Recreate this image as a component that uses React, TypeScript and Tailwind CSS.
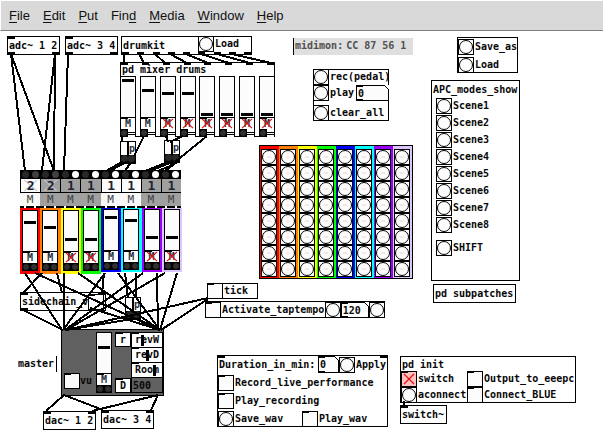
import React from "react";
import clsx from "clsx";

const MENUS: [string, string, string][] = [
  ["", "F", "ile"],
  ["", "E", "dit"],
  ["", "P", "ut"],
  ["Fin", "d", ""],
  ["", "M", "edia"],
  ["", "W", "indow"],
  ["", "H", "elp"],
];

const DRUMS = [
  { level: 97, muted: false },
  { level: 69, muted: false },
  { level: 59, muted: true },
  { level: 59, muted: true },
  { level: 0, muted: true },
  { level: 0, muted: true },
  { level: 0, muted: true },
  { level: 0, muted: true },
];

const CHANNELS = [
  { color: "bg-[#ff0000]", level: 75, muted: false, num: "2", shaded: false, crossed: true },
  { color: "bg-[#ff8000]", level: 60, muted: false, num: "2", shaded: true, crossed: true },
  { color: "bg-[#ffff00]", level: 27, muted: true, num: "1", shaded: true, crossed: false },
  { color: "bg-[#00ff00]", level: 27, muted: true, num: "1", shaded: true, crossed: false },
  { color: "bg-[#0000ff]", level: 86, muted: false, num: "1", shaded: false, crossed: false },
  { color: "bg-[#00ffff]", level: 76, muted: false, num: "1", shaded: false, crossed: false },
  { color: "bg-[#9900ff]", level: 29, muted: true, num: "1", shaded: true, crossed: false },
  { color: "bg-[#dcc4fc]", level: 29, muted: true, num: "1", shaded: true, crossed: false },
];

const SCENES = ["Scene1", "Scene2", "Scene3", "Scene4", "Scene5", "Scene6", "Scene7", "Scene8"];

// Patch cords, in window coordinates: x1, y1, x2, y2.
const CORDS: number[][] = [
  [11, 54, 25, 171], [11, 54, 54, 171], [55, 54, 42, 171], [55, 54, 54, 171], [68, 54, 64, 171],
  [124, 54, 124, 62], [139, 54, 144, 63], [155, 54, 165, 63], [170, 54, 187, 63],
  [186, 54, 208, 63], [201, 54, 229, 63], [217, 54, 250, 63], [232, 54, 271, 63],
  [122, 136, 122, 142], [144, 136, 134, 156], [166, 136, 168, 142], [183, 136, 170, 142], [207, 136, 170, 166],
  [122, 162, 106, 171], [126, 162, 110, 171], [131, 162, 125, 171],
  [168, 162, 145, 171], [172, 162, 150, 171], [177, 162, 165, 171], [170, 166, 158, 171],
  [25, 273, 62, 330], [35, 273, 160, 330], [42, 273, 23, 293], [57, 273, 62, 293],
  [64, 273, 64, 330], [78, 273, 160, 330], [105, 273, 63, 330], [104, 273, 102, 294],
  [118, 273, 160, 330], [125, 273, 128, 298], [136, 273, 136, 298], [143, 273, 65, 330],
  [157, 273, 158, 330], [165, 273, 66, 330], [177, 273, 160, 330],
  [23, 310, 63, 330], [90, 308, 160, 330], [132, 319, 66, 330], [138, 319, 160, 330],
  [208, 298, 66, 330], [208, 299, 161, 330],
  [64, 395, 46, 411], [64, 395, 103, 410], [158, 395, 92, 411], [158, 395, 151, 410],
  [404, 401, 404, 406],
];

function Ports({ count, side }: { count: number; side: "top" | "bottom" }) {
  return (
    <span
      className={clsx(
        "pointer-events-none absolute inset-x-0 flex justify-between",
        side === "top" ? "top-0" : "bottom-0",
      )}
    >
      {Array.from({ length: count }, (_, i) => (
        <span key={i} className="h-[2px] w-[7px] bg-black" />
      ))}
    </span>
  );
}

function Box({
  className,
  ins = 0,
  outs = 0,
  children,
}: {
  className: string;
  ins?: number;
  outs?: number;
  children?: React.ReactNode;
}) {
  return (
    <div className={clsx("absolute border border-black bg-white", className)}>
      {children}
      {ins > 0 && <Ports count={ins} side="top" />}
      {outs > 0 && <Ports count={outs} side="bottom" />}
    </div>
  );
}

function ObjectBox(props: { className: string; ins?: number; outs?: number; text: string }) {
  return (
    <Box className={clsx("flex h-[19px] items-center px-px", props.className)} ins={props.ins} outs={props.outs}>
      {props.text}
    </Box>
  );
}

function Bang({ label, className }: { label: string; className?: string }) {
  return (
    <button
      type="button"
      aria-label={label}
      className={clsx("block size-4 shrink-0 border border-black bg-[#fcfcfc]", className)}
    >
      <span className="block size-full rounded-full border border-black" />
    </button>
  );
}

function BangLabel({ text }: { text: string }) {
  return (
    <label className="flex items-center gap-px">
      <Bang label={text} />
      {text}
    </label>
  );
}

function Toggle({ label, on = false }: { label: string; on?: boolean }) {
  return (
    <span className="relative block size-4 shrink-0">
      <input
        type="checkbox"
        aria-label={label}
        defaultChecked={on}
        className="block size-4 appearance-none border border-black bg-[#fcfcfc] checked:bg-[#ffc0c0]"
      />
      <span className="pointer-events-none absolute left-0 top-0 h-[2px] w-[7px] bg-black" />
      {on && <Cross className="inset-0 p-[2px] text-[#e01010]" />}
    </span>
  );
}

function ToggleLabel({ text, on }: { text: string; on?: boolean }) {
  return (
    <label className="flex items-center gap-px">
      <Toggle label={text} on={on} />
      {text}
    </label>
  );
}

function Cross({ className }: { className: string }) {
  return (
    <svg
      viewBox="0 0 12 12"
      preserveAspectRatio="none"
      className={clsx("pointer-events-none absolute size-full", className)}
      aria-hidden="true"
    >
      <path
        d="M1 1L11 11M11 1L1 11"
        stroke="currentColor"
        strokeWidth="1.2"
        fill="none"
        vectorEffect="non-scaling-stroke"
      />
    </svg>
  );
}

function NumberBox({ label, value, className }: { label: string; value: string; className: string }) {
  return (
    <span className={clsx("relative block shrink-0", className)}>
      <input
        aria-label={label}
        defaultValue={value}
        className="block size-full rounded-none border border-black bg-[#fcfcfc] px-px font-bold"
      />
      <span className="pointer-events-none absolute left-0 top-0 h-[2px] w-[7px] bg-black" />
      <span className="pointer-events-none absolute bottom-0 left-0 h-[2px] w-[7px] bg-black" />
      <svg viewBox="0 0 5 5" className="absolute right-0 top-0 size-[5px]" aria-hidden="true">
        <path d="M0 0H5V5Z" fill="#fff" />
        <path d="M0 0L5 5" stroke="#000" strokeWidth="1" />
      </svg>
    </span>
  );
}

function Fader({ label, level }: { label: string; level: number }) {
  return (
    <input
      type="range"
      aria-label={label}
      defaultValue={level}
      className="m-0 block h-[42px] w-4 appearance-none rounded-none border border-black bg-[#fcfcfc] px-px [direction:rtl] [writing-mode:vertical-lr] [&::-webkit-slider-thumb]:h-[3px] [&::-webkit-slider-thumb]:w-3 [&::-webkit-slider-thumb]:appearance-none [&::-webkit-slider-thumb]:rounded-none [&::-webkit-slider-thumb]:border-0 [&::-webkit-slider-thumb]:bg-black"
    />
  );
}

function MuteBox({ label, muted }: { label: string; muted: boolean }) {
  return (
    <label className="relative flex h-[11px] w-4 items-center justify-center border-x border-black bg-white text-[#243040]">
      <input type="checkbox" aria-label={label} defaultChecked={muted} className="absolute inset-0 appearance-none" />
      <span className="relative">M</span>
      {muted && <Cross className="inset-0 px-px text-[#e01010]" />}
      <span className="absolute left-0 top-0 h-px w-[7px] bg-black" />
    </label>
  );
}

function Dots({ label }: { label: string }) {
  return (
    <span className="flex w-4 bg-black">
      <button type="button" aria-label={label + " solo"} className="size-2 rounded-full border border-black bg-[#303030]" />
      <button type="button" aria-label={label + " send"} className="size-2 rounded-full border border-black bg-[#303030]" />
    </span>
  );
}

function DrumStrip({ level, muted, label }: { level: number; muted: boolean; label: string }) {
  return (
    <div className="w-4">
      <Fader label={label} level={level} />
      <MuteBox label={label + " mute"} muted={muted} />
      <div className="flex h-2 w-4 border-r border-black bg-white">
        <span className="flex size-2 bg-black">
          <button type="button" aria-label={label + " bang"} className="size-2 rounded-full border border-black bg-[#303030]" />
        </span>
        <span className="mt-[3px] h-[3px] flex-1 border-y border-black" />
      </div>
    </div>
  );
}

function PanBox({ className }: { className: string }) {
  return (
    <div className={clsx("absolute flex h-[23px] w-4 flex-col border border-black bg-white", className)}>
      <div className="flex h-[13px] items-center">
        <span className="h-full w-[6px] bg-[#fcfcfc]" />
        <span className="h-full w-[2px] bg-black" />
        <span className="text-[#243040]">p</span>
      </div>
      <div className="flex h-2 bg-black">
        <span className="size-[7px] rounded-full bg-[#282828]" />
        <span className="size-[7px] rounded-full bg-[#282828]" />
      </div>
    </div>
  );
}

function MiniSlider({ text, level }: { text: string; level: number }) {
  return (
    <label className="relative flex h-[15px] w-8 items-center justify-center border border-b-0 border-black bg-white">
      {text}
      <input
        type="range"
        aria-label={text}
        defaultValue={level}
        className="absolute inset-0 m-0 w-full appearance-none bg-transparent [&::-webkit-slider-thumb]:h-[11px] [&::-webkit-slider-thumb]:w-[3px] [&::-webkit-slider-thumb]:appearance-none [&::-webkit-slider-thumb]:rounded-none [&::-webkit-slider-thumb]:border-0 [&::-webkit-slider-thumb]:bg-black"
      />
      <span className="pointer-events-none absolute left-0 top-0 h-px w-[7px] bg-black" />
    </label>
  );
}

function MenuBar() {
  return (
    <nav className="flex h-[31px] items-center gap-[13px] border-b border-l border-t border-b-[#808080] border-l-white border-t-white bg-[#d9d9d9] pl-2 font-['Liberation_Sans',Arial,sans-serif] text-[13px] leading-4 text-[#111]">
      {MENUS.map(([before, key, after]) => (
        <button key={before + key + after} type="button">
          {before}
          <span className="underline underline-offset-2">{key}</span>
          {after}
        </button>
      ))}
    </nav>
  );
}

function ChannelHeads() {
  return (
    <div className="absolute left-[20px] top-[139px] grid w-[161px] grid-cols-8">
      {CHANNELS.map((c, i) => (
        <div key={i} className="relative">
          <div className="flex h-[9px] items-center justify-around bg-black">
            <button type="button" aria-label={"Pick " + (i + 1)} className="size-[7px] rounded-full bg-[#282828]" />
            <button
              type="button"
              aria-label={"Arm " + (i + 1)}
              className={clsx("size-[7px] rounded-full", i > 1 ? "bg-white" : "bg-[#404040]")}
            />
          </div>
          <div
            className={clsx(
              "relative flex h-[14px] items-center justify-center border-b border-l border-black text-[13px] text-[#1c2430]",
              c.shaded ? "bg-[#a0a0a0]" : "bg-[#fcfcfc]",
            )}
          >
            {c.crossed && <Cross className="inset-0 px-[2px] text-[#c8c8c8]" />}
            <span className="relative">{c.num}</span>
          </div>
          <div
            className={clsx(
              "flex h-[13px] items-center justify-center text-[11px] font-normal text-[#404040]",
              c.shaded ? "bg-[#a0a0a0]" : "bg-[#f8f8f8]",
            )}
          >
            M
          </div>
          <div className="flex h-[2px] justify-around bg-black">
            <span className="w-[2px] bg-white" />
            <span className="w-[2px] bg-white" />
          </div>
        </div>
      ))}
    </div>
  );
}

function ChannelFaders() {
  return (
    <div className="absolute left-[20px] top-[177px] grid w-[162px] grid-cols-8 items-start">
      {CHANNELS.map((c, i) => (
        <div key={i} className={clsx("flex justify-center", c.color, i > 3 ? "h-[64px] pt-px" : "h-[66px] pt-[2px]")}>
          <div className="w-4">
            <Fader label={"Channel " + (i + 1)} level={c.level} />
            <MuteBox label={"Mute " + (i + 1)} muted={c.muted} />
            <Dots label={"Channel " + (i + 1)} />
          </div>
        </div>
      ))}
    </div>
  );
}

function ClipGrid() {
  return (
    <div className="absolute left-[259px] top-[114px] flex border border-black">
      {CHANNELS.map((c, i) => (
        <div key={i} className={clsx("w-[19px] pb-px pl-px pt-[3px]", c.color)}>
          {SCENES.map((s) => (
            <button
              key={s}
              type="button"
              aria-label={s + ", channel " + (i + 1)}
              className="block size-4 border border-black bg-[#fcfcfc]"
            >
              <span className="flex size-full items-center justify-center rounded-full border border-black">
                <span className="h-[2px] w-1 bg-[#fde4e4]" />
              </span>
            </button>
          ))}
        </div>
      ))}
    </div>
  );
}

function Master() {
  return (
    <>
      <div className="absolute left-[18px] top-[325px] flex h-4 items-center border-r border-black pr-[2px]">master</div>
      <div className="absolute left-[61px] top-[298px] flex h-[67px] w-[103px] border border-black bg-[#606060] pt-[2px]">
        <label className="mt-[41px] flex h-4 w-[34px] items-center pl-[2px]">
          <Toggle label="vu" />
          vu
        </label>
        <div className="w-4">
          <Fader label="Master" level={67} />
          <MuteBox label="Mute master" muted={false} />
          <Dots label="Master" />
        </div>
        <div className="ml-[3px] flex w-4 flex-col justify-between pb-[2px]">
          <div className="relative flex h-[15px] items-center justify-center border border-black bg-white">
            r
            <span className="absolute left-0 top-0 h-px w-[7px] bg-black" />
          </div>
          <div className="relative flex h-[15px] items-center justify-center border border-black bg-white">
            D
            <span className="absolute left-0 top-0 h-px w-[7px] bg-black" />
          </div>
        </div>
        <div className="w-8">
          <MiniSlider text="revW" level={34} />
          <MiniSlider text="revD" level={52} />
          <MiniSlider text="Room" level={78} />
          <input
            aria-label="Delay time"
            defaultValue="500"
            className="block h-4 w-8 rounded-none border border-black bg-[#606060] pl-px font-bold"
          />
        </div>
      </div>
    </>
  );
}

function Cords() {
  return (
    <svg
      className="pointer-events-none absolute left-0 top-0 size-full overflow-visible"
      shapeRendering="crispEdges"
      aria-hidden="true"
    >
      <g transform="translate(0 -31)" stroke="#000" strokeWidth="2">
        {CORDS.map(([x1, y1, x2, y2], i) => (
          <line key={i} x1={x1} y1={y1} x2={x2} y2={y2} />
        ))}
      </g>
    </svg>
  );
}

export default function App() {
  return (
    <div className="flex min-h-screen flex-col bg-white">
      <MenuBar />
      <main className="relative flex-1 overflow-hidden whitespace-nowrap font-['DejaVu_Sans_Mono',monospace] text-[10px] font-bold leading-3 text-[#080808]">
        <ObjectBox className="left-[7px] top-[5px] w-[53px]" text="adc~ 1 2" ins={1} outs={2} />
        <ObjectBox className="left-[65px] top-[5px] w-[53px]" text="adc~ 3 4" ins={1} outs={2} />

        <Box className="left-[121px] top-[5px] flex h-[19px] w-[131px] items-start pl-px" outs={9}>
          <span className="w-[75px] self-center">drumkit</span>
          <div className="-mt-px">
            <BangLabel text="Load" />
          </div>
        </Box>

        <Box className="left-[120px] top-[31px] h-[75px] w-[155px]" ins={8}>
          <p className="pl-px pt-px">pd mixer drums</p>
          <div className="-mx-px flex justify-between">
            {DRUMS.map((d, i) => (
              <DrumStrip key={i} label={"Drum " + (i + 1)} level={d.level} muted={d.muted} />
            ))}
          </div>
        </Box>

        <PanBox className="left-[120px] top-[110px]" />
        <PanBox className="left-[164px] top-[109px]" />

        <ChannelHeads />
        <ChannelFaders />

        <Box className="left-[20px] top-[261px] flex h-[19px] w-[86px] items-center pl-px" ins={2} outs={1}>
          <span className="w-[66px]">sidechain_v</span>
          <Toggle label="sidechain_v" />
        </Box>
        <PanBox className="left-[125px] top-[266px]" />

        <Master />
        <ObjectBox className="left-[43px] top-[380px] w-[53px]" text="dac~ 1 2" ins={2} />
        <ObjectBox className="left-[101px] top-[379px] w-[53px]" text="dac~ 3 4" ins={2} />

        <div className="absolute left-[293px] top-[7px] flex h-[17px] w-[120px] items-center gap-[3px] border-l border-black bg-[#dfdfdf] pb-[2px] pl-px text-[#505050]">
          <span>midimon:</span>
          <span>CC 87 56 1</span>
        </div>

        <Box className="left-[313px] top-[38px] w-[76px]">
          <div className="-m-px">
            <BangLabel text="rec(pedal)" />
            <div className="flex gap-[2px]">
              <BangLabel text="play" />
              <NumberBox label="Play number" value="0" className="h-4 w-[33px]" />
            </div>
            <div className="pt-1">
              <BangLabel text="clear_all" />
            </div>
          </div>
        </Box>

        <Box className="left-[457px] top-[6px] flex w-[61px] flex-col gap-[2px] pt-px">
          <BangLabel text="Save_as" />
          <div className="-mb-px">
            <BangLabel text="Load" />
          </div>
        </Box>

        <Box className="left-[431px] top-[49px] h-[201px] w-[89px]">
          <p className="pl-px pt-[3px]">APC_modes_show</p>
          <div className="flex flex-col gap-px pl-1 pt-[2px]">
            {SCENES.map((s) => (
              <BangLabel key={s} text={s} />
            ))}
            <div className="pt-[6px]">
              <BangLabel text="SHIFT" />
            </div>
          </div>
        </Box>
        <ObjectBox className="left-[433px] top-[253px] w-[83px]" text="pd subpatches" />

        <ClipGrid />

        <Box className="left-[207px] top-[252px] w-[51px]">
          <div className="-m-px">
            <ToggleLabel text="tick" />
          </div>
        </Box>
        <Box className="left-[205px] top-[270px] w-[180px]">
          <div className="-mx-px -mb-px flex items-center justify-between">
            <ToggleLabel text="Activate_taptempo" />
            <Bang label="Tap" />
            <NumberBox label="Tempo" value="120" className="h-4 w-[28px]" />
            <Bang label="Send tempo" />
          </div>
        </Box>

        <Box className="left-[217px] top-[324px] flex w-[171px] flex-col gap-[2px]" ins={2}>
          <div className="flex items-center pl-px">
            <span className="w-[99px]">Duration_in_min:</span>
            <NumberBox label="Duration in minutes" value="0" className="h-[17px] w-[21px]" />
            <BangLabel text="Apply" />
          </div>
          <ToggleLabel text="Record_live_performance" />
          <ToggleLabel text="Play_recording" />
          <div className="-mb-px flex">
            <span className="w-[84px]">
              <BangLabel text="Save_wav" />
            </span>
            <ToggleLabel text="Play_wav" />
          </div>
        </Box>

        <Box className="left-[400px] top-[325px] w-[176px]">
          <p className="pl-px pt-[2px]">pd init</p>
          <div className="-mb-px grid grid-cols-[66px_1fr]">
            <ToggleLabel text="switch" on />
            <ToggleLabel text="Output_to_eeepc" />
            <BangLabel text="aconnect" />
            <ToggleLabel text="Connect_BLUE" />
          </div>
        </Box>
        <ObjectBox className="left-[400px] top-[374px] w-[47px]" text="switch~" ins={1} />

        <Cords />
      </main>
    </div>
  );
}
